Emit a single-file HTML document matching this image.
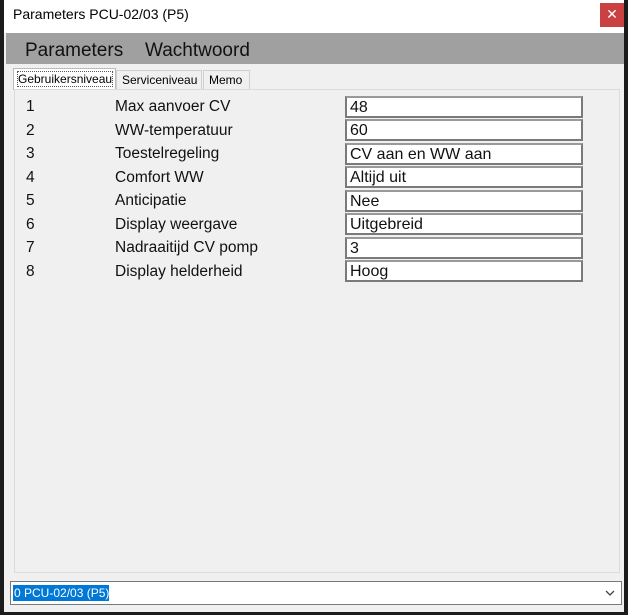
<!DOCTYPE html>
<html><head><style>
*{margin:0;padding:0;box-sizing:border-box}
body{width:628px;height:615px;background:#1c1c1c;position:relative;overflow:hidden;font-family:"Liberation Sans",sans-serif}
.win{position:absolute;left:4px;top:0;width:620px;height:612px;background:#f0f0f0}
.title{position:absolute;left:0;top:0;width:620px;height:33px;background:#fff;font-size:14px;color:#000;padding:6px 0 0 9px}
.close{position:absolute;left:596px;top:3px;width:24px;height:24px;background:#c94141;color:#fff;font-size:14px;text-align:center;line-height:23px}
.menu{position:absolute;left:2px;top:33px;width:618px;height:31px;background:#a0a0a0;font-size:19px;color:#111}
.menu span{position:absolute;top:7px}
.tab{position:absolute;top:70px;height:20px;font-size:12px;border:1px solid #d0d0d0;border-bottom:none;background:#f0f0f0;padding:2px 0 0 5px}
.tab.sel{background:#fff;top:68px;height:22px;border-color:#bbb;padding-top:3px}
.tab.sel i{font-style:normal;outline:1px dotted #555}
.panel{position:absolute;left:10px;top:89px;width:606px;height:484px;border:1px solid #dcdcdc;background:#f0f0f0}
.n,.l{position:absolute;font-size:15.5px;color:#111}
.f{position:absolute;left:341px;width:238px;height:22px;background:#fff;border:2px solid #7a7a7a;border-top-color:#999;font-size:16px;padding:1px 0 0 3px;color:#111}
.combo{position:absolute;left:6px;top:581px;width:612px;height:24px;background:#fff;border:1px solid #7a7a7a}
.combo span{position:absolute;left:2px;top:3px;background:#0078d7;color:#fff;font-size:12px;padding:1px 0 1px 1px}
</style></head><body>
<div class="win">
<div class="title">Parameters PCU-02/03 (P5)</div>
<div class="close">✕</div>
<div class="menu"><span style="left:19px">Parameters</span><span style="left:139px">Wachtwoord</span></div>
<div class="tab" style="left:112px;width:86px">Serviceniveau</div>
<div class="tab" style="left:199px;width:47px">Memo</div>
<div class="tab sel" style="left:9px;width:103px;padding-left:4px"><i>Gebruikersniveau</i></div>
<div class="panel"></div>
<div class="n" style="left:22px;top:98px">1</div><div class="l" style="left:111px;top:98px">Max aanvoer CV</div><div class="f" style="top:96px">48</div>
<div class="n" style="left:22px;top:122px">2</div><div class="l" style="left:111px;top:122px">WW-temperatuur</div><div class="f" style="top:119px">60</div>
<div class="n" style="left:22px;top:145px">3</div><div class="l" style="left:111px;top:145px">Toestelregeling</div><div class="f" style="top:143px">CV aan en WW aan</div>
<div class="n" style="left:22px;top:169px">4</div><div class="l" style="left:111px;top:169px">Comfort WW</div><div class="f" style="top:166px">Altijd uit</div>
<div class="n" style="left:22px;top:192px">5</div><div class="l" style="left:111px;top:192px">Anticipatie</div><div class="f" style="top:190px">Nee</div>
<div class="n" style="left:22px;top:216px">6</div><div class="l" style="left:111px;top:216px">Display weergave</div><div class="f" style="top:213px">Uitgebreid</div>
<div class="n" style="left:22px;top:239px">7</div><div class="l" style="left:111px;top:239px">Nadraaitijd CV pomp</div><div class="f" style="top:237px">3</div>
<div class="n" style="left:22px;top:263px">8</div><div class="l" style="left:111px;top:263px">Display helderheid</div><div class="f" style="top:260px">Hoog</div>
<div class="combo"><span>0 PCU-02/03 (P5)</span>
<svg style="position:absolute;right:6px;top:8px" width="10" height="7" viewBox="0 0 10 7"><path d="M1 1 L5 5 L9 1" fill="none" stroke="#444" stroke-width="1.3"/></svg></div>
</div>
</body></html>
